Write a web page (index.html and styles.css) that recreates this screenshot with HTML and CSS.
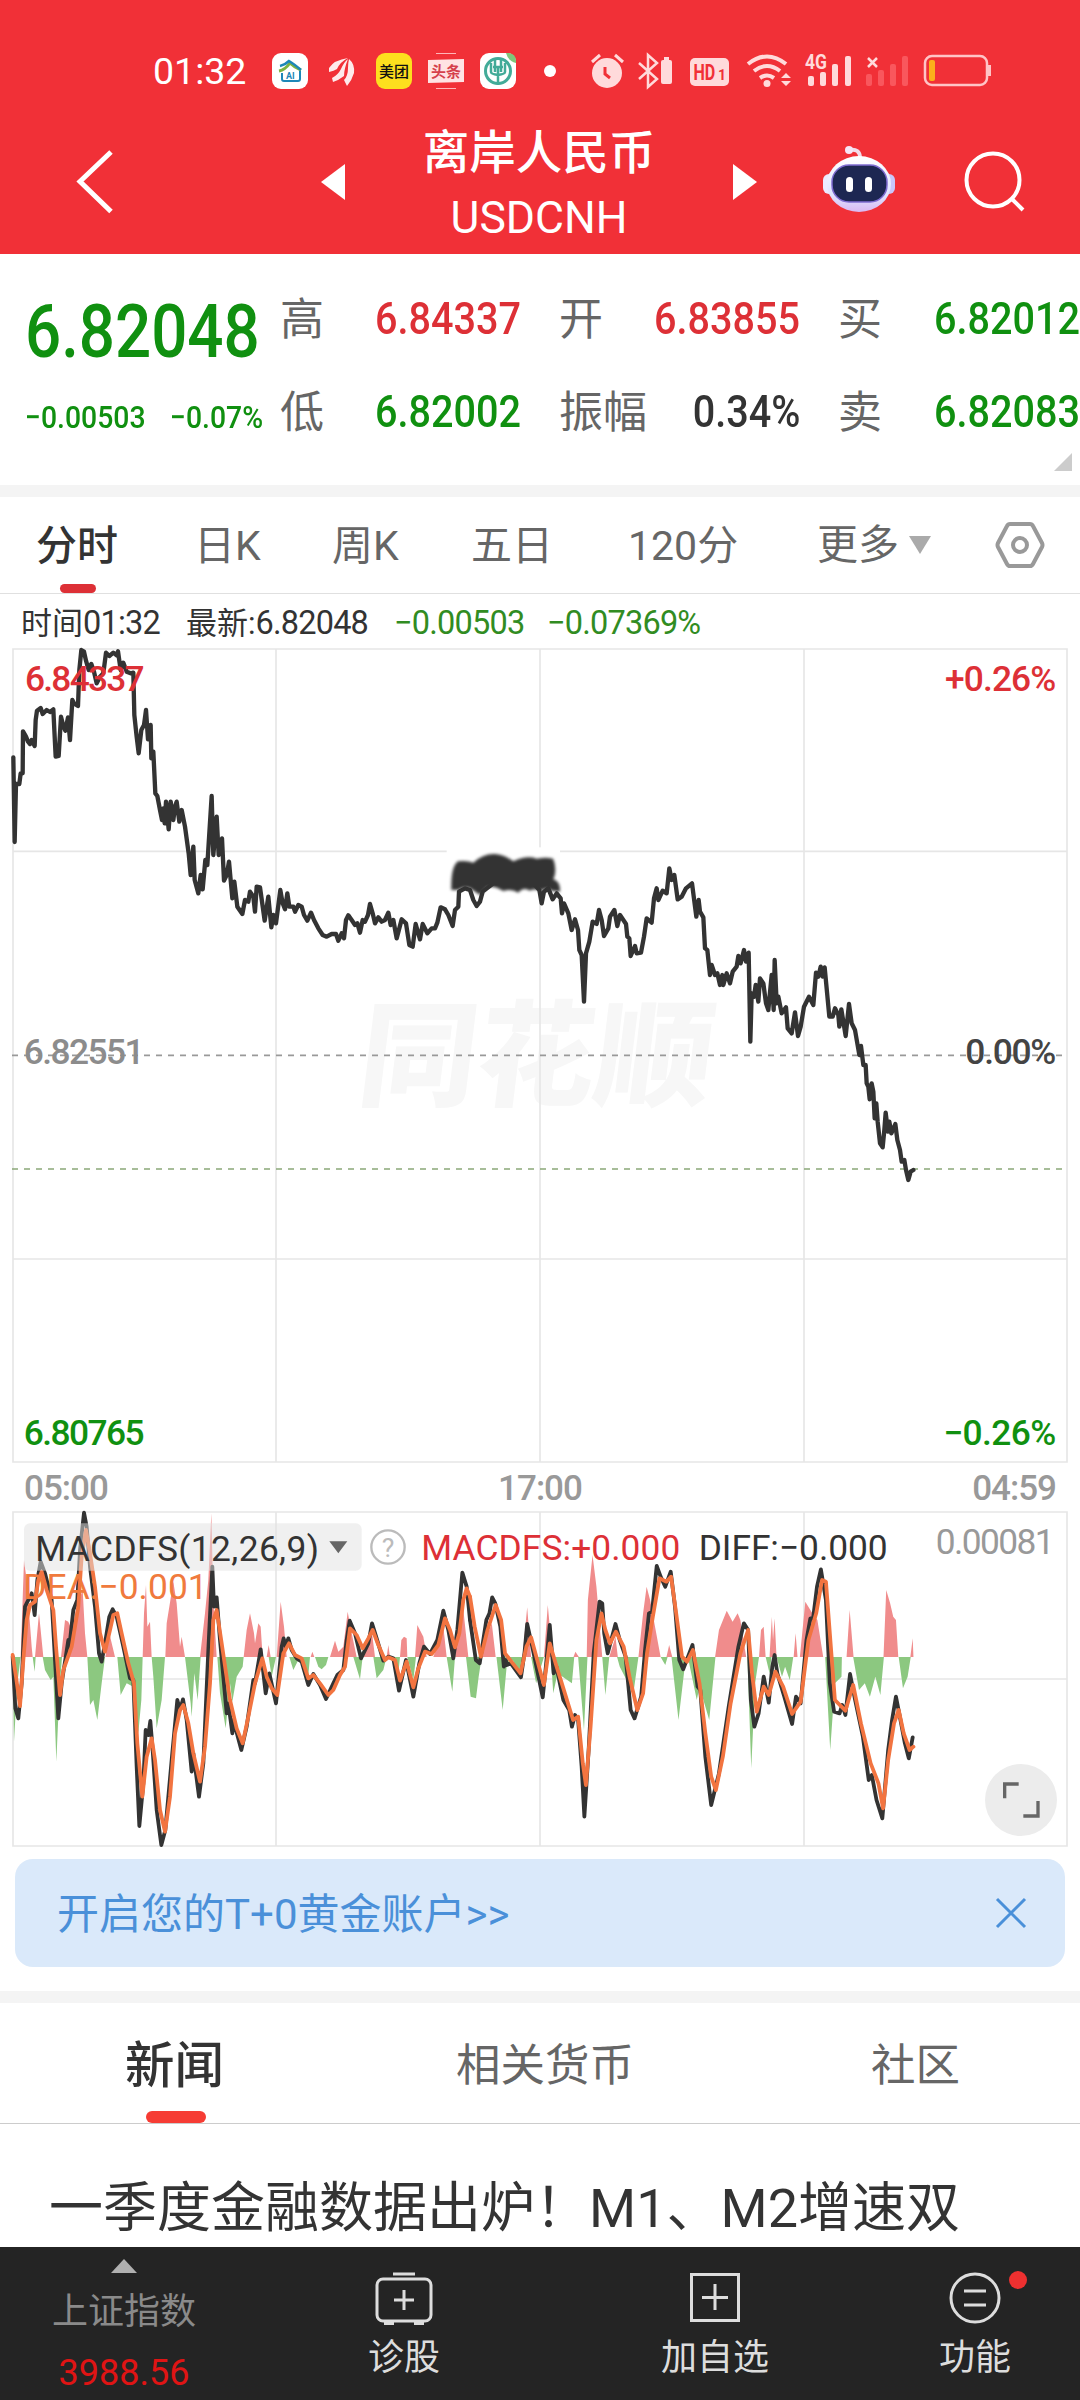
FILE: index.html
```html
<!DOCTYPE html>
<html lang="zh-CN">
<head>
  <meta charset="UTF-8">
  <meta name="viewport" content="width=device-width, initial-scale=1.0">
  <title>离岸人民币 USDCNH</title>
  <link rel="stylesheet" href="styles.css">
</head>
<body>
  <div class="page">
    <header class="header">
      <!-- Status bar -->
      <div class="status-bar">
        <span class="clock">01:32</span>
        <svg class="app-icons" width="284" height="44" viewBox="272 49 284 44">
          <rect x="272" y="53" width="36" height="36" rx="9" fill="#fff"/>
          <path d="M279 71q6-1 11-8 5 5 11 7" fill="none" stroke="#7cb342" stroke-width="3"/>
          <path d="M280 66q5-1 9-5 5 3 12 9" fill="none" stroke="#1d87b8" stroke-width="2.5"/>
          <path d="M282 73v6q0 2 2 2h14q2 0 2-2v-8" fill="none" stroke="#1d87b8" stroke-width="2"/>
          <text x="286" y="79" font-size="9" font-weight="700" fill="#1d87b8">AI</text>
          <path d="M329 68q5-8 19-10-8 4-11 11-3 2-8 3zM332 78q6-3 9-9 3-7 7-10-4 10-4 17-5 4-11 6zM347 86l-3-6q4-4 4-12 0-5 1-9 6 5 5 14-2 7-7 13z" fill="#fff" opacity=".9"/>
          <rect x="376" y="53" width="36" height="36" rx="9" fill="#fddf1e"/>
          <text x="379" y="77" font-size="15" font-weight="500" fill="#111">美团</text>
          <path d="M428 60l36-1v23l-36 1z" fill="#ffe3e4"/>
          <path d="M436 53.500h20M436 88.500h20" stroke="#ffb5b8" stroke-width="1"/>
          <text x="431" y="77" font-size="15" font-weight="700" fill="#d6404c">头条</text>
          <rect x="480" y="53" width="36" height="36" rx="9" fill="#fff"/>
          <circle cx="498" cy="71" r="12.500" fill="none" stroke="#42ab98" stroke-width="3"/>
          <path d="M495 58v14M501 58v14M491 63v9q0 2 7 3 7-1 7-3v-9M498 66v19M493 67h10" fill="none" stroke="#42ab98" stroke-width="2.500"/>
          <path d="M506 53h3q7 1 7 8v2q-8-2-10-10z" fill="#7fc67a"/>
          <circle cx="550" cy="71" r="6" fill="#fff"/>
        </svg>
        <svg class="system-icons" width="401" height="44" viewBox="591 49 401 44">
          <g fill="#ffdadb">
            <circle cx="607" cy="73" r="15"/>
            <path d="M592 62l8-7M615 55l8 7" stroke="#ffdadb" stroke-width="3"/>
            <path d="M605 67v7l5 4" fill="none" stroke="#f13037" stroke-width="3"/>
            <path d="M639 63l18 16-9 8V55l9 8-18 16" fill="none" stroke="#ffdadb" stroke-width="2.500"/>
            <rect x="661" y="60" width="11" height="24" rx="2"/><rect x="664" y="57" width="5" height="3"/>
            <rect x="690" y="58" width="39" height="28" rx="5"/>
            <text transform="translate(693.500 80) scale(.73 1)" font-size="22" font-weight="700" fill="#f13037">HD</text>
            <text x="718" y="80" font-size="14" font-weight="700" fill="#f13037">1</text>
            <g fill="none" stroke="#ffdadb" stroke-width="4">
              <path d="M748 64q19-15 38 0M754 71q13-10 26 0M760 78q7-5 14 0"/>
            </g>
            <circle cx="767" cy="83.500" r="3.500"/>
            <path d="M781 78l5-5 5 5zM781 81l5 5 5-5z"/>
            <text x="805" y="69" font-size="20" font-weight="700" textLength="22" lengthAdjust="spacingAndGlyphs">4G</text>
            <rect x="808" y="76" width="6" height="10" rx="2"/><rect x="820" y="72" width="6" height="14" rx="2"/><rect x="832" y="64" width="6" height="22" rx="2"/><rect x="845" y="56" width="6" height="30" rx="2"/>
            <path d="M868 58l9 9M877 58l-9 9" stroke="#ffdadb" stroke-width="2.500"/>
          </g>
          <g fill="#f9575d">
            <rect x="866" y="74" width="6" height="12" rx="2"/><rect x="878" y="70" width="6" height="16" rx="2"/><rect x="890" y="64" width="6" height="22" rx="2"/><rect x="902" y="56" width="6" height="30" rx="2"/>
          </g>
          <rect x="925" y="56" width="62" height="29" rx="7" fill="none" stroke="#ffc4c6" stroke-width="2.500"/>
          <rect x="929" y="60" width="6" height="21" rx="2" fill="#fcae1b"/>
          <rect x="988" y="65" width="3" height="11" fill="#ffc4c6"/>
        </svg>
      </div>

      <!-- Title bar -->
      <div class="title-bar">
        <svg class="back" width="40" height="68" viewBox="0 0 40 68"><path d="M38 4L7 33.500l31 30" fill="none" stroke="#fff" stroke-width="5"/></svg>
        <svg class="prev" width="24" height="36" viewBox="0 0 24 36"><path d="M24 0v36L0 18z" fill="#fff"/></svg>
        <div class="title">
          <div class="title-name">离岸人民币</div>
          <div class="title-code">USDCNH</div>
        </div>
        <svg class="next" width="24" height="36" viewBox="0 0 24 36"><path d="M0 0v36l24-18z" fill="#fff"/></svg>
        <svg class="robot" width="74" height="72" viewBox="824 144 74 72">
          <defs>
            <linearGradient id="shell" x1="0" y1="0" x2="0" y2="1">
              <stop offset="0" stop-color="#fff"/><stop offset=".7" stop-color="#dfe3ff"/><stop offset="1" stop-color="#d9b8f2"/>
            </linearGradient>
          </defs>
          <path d="M851 150q11-2 11 8" fill="none" stroke="#f3dcea" stroke-width="4"/>
          <circle cx="851" cy="150" r="4" fill="#f6e6f5"/>
          <rect x="825" y="174" width="13" height="20" rx="6" fill="#eceaff"/>
          <rect x="884" y="174" width="13" height="20" rx="6" fill="#c9c6fa"/>
          <ellipse cx="861" cy="184" rx="32" ry="28" fill="url(#shell)"/>
          <rect x="834" y="165" width="55" height="37" rx="17" fill="#1d2752" stroke="#7d6bd0" stroke-width="1.500"/>
          <rect x="848" y="177" width="7" height="15" rx="3.500" fill="#fff"/>
          <rect x="867" y="177" width="7" height="15" rx="3.500" fill="#fff"/>
        </svg>
        <svg class="search" width="62" height="64" viewBox="0 0 62 64">
          <circle cx="29" cy="30" r="26.500" fill="none" stroke="#fff" stroke-width="4"/><path d="M47 48l12 12" stroke="#fff" stroke-width="4"/>
        </svg>
      </div>
    </header>

    <!-- Quote -->
    <section class="quote">
      <div class="price-block">
        <div class="price num down">6.82048</div>
        <div class="change down"><span class="num">−0.00503</span><span class="num">−0.07%</span></div>
      </div>
      <div class="quote-grid">
        <div class="cell"><span class="label">高</span><span class="num value up">6.84337</span></div>
        <div class="cell"><span class="label">开</span><span class="num value up">6.83855</span></div>
        <div class="cell"><span class="label">买</span><span class="num value down">6.82012</span></div>
        <div class="cell"><span class="label">低</span><span class="num value down">6.82002</span></div>
        <div class="cell"><span class="label">振幅</span><span class="num value">0.34%</span></div>
        <div class="cell"><span class="label">卖</span><span class="num value down">6.82083</span></div>
      </div>
      <span class="corner"></span>
    </section>

    <!-- Period tabs -->
    <nav class="period-tabs">
      <span class="active">分时</span>
      <span>日K</span>
      <span>周K</span>
      <span>五日</span>
      <span>120分</span>
      <span class="more">更多<i class="caret"></i></span>
      <svg width="50" height="48" viewBox="0 0 50 48" fill="none" stroke="#999" stroke-width="4">
        <path d="M15 3h20q2 0 3 2l9 17q1 2 0 4l-9 17q-1 2-3 2H15q-2 0-3-2L3 26q-1-2 0-4l9-17q1-2 3-2z"/><circle cx="25" cy="24" r="7"/>
      </svg>
    </nav>

    <div class="info">
      <span class="info-time">时间<b>01:32</b></span>
      <span class="info-last">最新:<b>6.82048</b></span>
      <span class="info-diff"><b>−0.00503</b></span>
      <span><b>−0.07369%</b></span>
    </div>

    <!-- Price chart, drawn at 3 units per pixel -->
    <svg class="price-chart" width="1080" height="824" viewBox="0 0 3240 2472">
      <text class="watermark" transform="translate(1066 1372) skewX(-7)" x="0" y="0" textLength="1060" lengthAdjust="spacingAndGlyphs">同花顺</text>
      <g class="grid">
        <path d="M39 27H3201V2466H39zM828 27V2466M1620 27V2466M2412 27V2466M39 634H3201M39 1857H3201"/>
      </g>
      <path class="mid-line" d="M36 1246H3190"/>
      <path class="now-line" d="M36 1587H3190"/>
      <rect x="1340" y="622" width="340" height="125" fill="#fff"/>
      <polyline class="price-line" points="40,352 44,606 48,432 58,432 62,400 68,400 69,274 78,290 84,305 90,312 95,300 104,318 107,240 111,212 122,204 128,222 140,210 150,216 160,208 163,270 167,350 176,348 183,230 190,258 196,272 204,232 210,300 217,180 222,190 234,198 238,90 244,30 252,35 258,62 266,90 274,72 282,95 290,130 300,110 310,100 318,38 328,48 340,38 350,46 354,34 362,90 370,68 380,95 392,100 400,98 403,225 410,290 416,340 424,270 432,255 438,210 444,298 452,255 454,355 460,335 466,460 472,468 480,510 486,540 490,505 494,550 498,485 506,568 512,485 520,540 525,500 530,485 538,545 545,510 555,560 566,640 572,705 580,620 584,720 595,760 602,705 608,748 616,660 622,675 635,468 640,645 650,530 656,645 666,595 672,722 680,705 687,665 697,775 703,725 712,800 727,822 735,780 745,785 750,755 760,770 765,815 770,740 780,742 794,842 805,770 814,862 820,825 828,850 841,750 848,790 855,808 862,760 868,800 880,800 885,815 895,795 905,800 912,825 922,842 933,818 942,840 955,865 968,885 980,890 995,882 1008,882 1015,902 1025,880 1032,895 1038,840 1045,826 1055,840 1065,855 1072,850 1080,878 1088,840 1095,845 1104,825 1110,792 1118,820 1125,850 1135,832 1145,845 1155,840 1165,818 1172,855 1180,840 1190,895 1205,838 1218,850 1228,915 1238,920 1247,852 1260,898 1268,852 1282,880 1295,865 1305,865 1312,848 1322,802 1335,808 1345,825 1358,858 1365,810 1375,800 1377,755 1395,745 1410,750 1420,780 1430,798 1440,785 1448,755 1480,730 1600,730 1618,750 1625,790 1632,755 1645,745 1658,778 1670,760 1682,775 1686,820 1692,790 1705,820 1715,870 1725,838 1734,870 1738,930 1745,945 1752,1085 1758,940 1768,905 1778,845 1790,852 1797,810 1805,840 1812,888 1825,865 1830,830 1843,810 1852,858 1860,825 1878,852 1882,890 1888,895 1892,948 1905,918 1910,940 1923,938 1932,890 1940,835 1955,848 1962,775 1970,745 1975,780 1988,752 2000,760 2008,685 2015,720 2023,705 2033,778 2045,770 2058,745 2076,730 2089,830 2096,780 2100,815 2110,832 2115,925 2122,930 2130,1005 2135,975 2145,1005 2152,1000 2160,1035 2167,1005 2170,1035 2180,1000 2190,1030 2198,995 2210,980 2215,948 2222,970 2232,930 2238,965 2246,938 2251,1205 2255,1060 2262,1070 2267,1035 2275,1085 2280,1015 2290,1030 2298,1090 2305,1110 2315,1005 2321,1110 2324,960 2330,1090 2335,1070 2345,1120 2358,1102 2363,1165 2375,1180 2385,1117 2394,1188 2402,1160 2412,1100 2427,1070 2440,1095 2448,998 2455,1010 2462,980 2468,1010 2474,982 2488,1130 2498,1130 2505,1105 2515,1125 2518,1160 2524,1108 2537,1188 2547,1092 2555,1150 2565,1170 2578,1245 2583,1218 2590,1275 2597,1275 2600,1330 2605,1340 2609,1378 2615,1330 2620,1355 2624,1435 2629,1390 2633,1445 2640,1510 2648,1522 2653,1470 2657,1418 2664,1475 2668,1445 2674,1480 2686,1452 2692,1500 2700,1530 2705,1565 2713,1560 2718,1590 2725,1620 2732,1595 2740,1590"/>
      <path class="scribble" d="M1354 750Q1352 680 1374 664Q1400 660 1420 668Q1450 640 1485 642Q1515 645 1540 664Q1580 645 1610 656Q1650 650 1660 658Q1672 690 1660 718Q1682 725 1680 755L1655 752Q1640 740 1625 752Q1600 745 1590 752Q1570 740 1555 758Q1535 745 1510 753Q1480 735 1462 742L1440 765L1410 745Q1390 738 1375 750Z"/>
      <g class="chart-text">
        <text x="75" y="153" fill="#dd3036" textLength="358">6.84337</text>
        <text x="2835" y="153" fill="#dd3036" textLength="333">+0.26%</text>
        <text x="71" y="1272" fill="#8c8c8c" textLength="362">6.82551</text>
        <text x="2896" y="1272" fill="#444" textLength="272">0.00%</text>
        <text x="71" y="2415" fill="#109010" textLength="362">6.80765</text>
        <text x="2830" y="2415" fill="#109010" textLength="338">−0.26%</text>
      </g>
    </svg>

    <div class="time-axis"><span>05:00</span><span>17:00</span><span>04:59</span></div>

    <!-- MACD chart, same 3 units per pixel -->
    <svg class="macd-chart" width="1080" height="341" viewBox="0 330 3240 1023">
      <g class="grid"><path d="M39 336H3201V1338H39zM828 336V1338M1620 336V1338M2412 336V1338M39 837H3201"/></g>
      <path class="bar-up" d="M62 771L72 480 80 540 95 740 98 771zM105 771L117 640 130 771zM183 771L195 660 205 665 215 690 230 620 248 570 255 700 262 771zM316 771L328 700 345 771zM428 771L432 640 438 555 442 680 450 665 455 771zM496 771L500 670 520 545 530 610 540 740 545 710 555 771zM600 771L615 640 625 540 634 340 640 600 650 771zM731 771L740 690 750 640 762 700 765 730 775 670 782 680 788 771zM800 771L806 735 812 771zM830 771L842 605 852 680 860 771zM932 771L937 755 943 771zM990 771L1005 722 1015 755 1030 740 1043 635 1055 700 1070 771zM1088 771L1105 735 1115 690 1125 771zM1160 771L1165 735 1170 771zM1200 771L1204 720 1212 710 1220 715 1222 771zM1245 771L1252 675 1270 710 1280 771zM1300 771L1330 680 1340 771zM1365 771L1387 600 1405 771z"/>
      <path class="bar-down" d="M38 771L42 1025 52 850 62 771zM98 771L104 815 107 771zM128 771L135 810 152 840 160 830 169 1085 178 880 186 771zM262 771L270 915 280 900 292 960 305 850 315 771zM352 771L362 885 380 850 400 860 415 1000 424 900 428 771zM455 771L460 830 470 985 485 900 495 771zM555 771L572 910 575 950 583 820 593 900 602 771zM652 771L660 880 677 985 690 850 697 905 710 830 728 800 731 771zM806 771L815 830 828 771zM868 771L880 810 895 780 905 771 925 825 930 771zM945 771L955 800 965 808 978 795 985 771zM1060 771L1080 838 1088 771zM1120 771L1130 835 1150 810 1160 771zM1170 771L1195 820 1200 771zM1222 771L1240 840 1248 771zM1340 771L1357 875 1365 771zM1398 771L1412 890 1428 895 1436 830 1445 771z"/>
      <polyline class="diff-line" points="38,770 46,925 55,955 65,850 75,620 95,580 104,645 112,540 122,485 135,520 155,600 165,780 175,955 185,850 205,720 208,740 220,630 232,600 240,450 252,338 260,380 270,500 285,620 297,760 305,785 315,730 328,650 338,628 350,650 370,740 390,835 400,840 410,1100 418,1278 430,1150 437,990 445,1005 451,963 458,1050 470,1230 484,1335 496,1290 515,1080 532,900 540,930 549,898 560,960 575,1115 580,1060 597,1190 610,1090 625,750 637,500 642,620 650,592 660,720 680,940 685,910 697,1000 700,960 724,1050 740,980 760,840 765,850 782,748 797,880 808,820 828,910 845,740 851,715 857,740 865,715 875,750 890,775 905,785 925,855 940,822 960,855 978,897 1000,850 1012,825 1030,810 1040,720 1049,662 1065,700 1083,775 1105,730 1116,670 1130,715 1150,782 1165,770 1180,775 1197,872 1218,780 1240,890 1258,790 1272,740 1290,762 1312,720 1330,632 1345,690 1360,775 1372,690 1387,518 1400,560 1410,660"/>
      <polyline class="dea-line" points="38,765 48,830 60,918 70,780 80,660 90,615 105,605 115,540 125,515 140,570 160,630 168,740 180,885 190,810 215,740 235,620 245,470 258,390 270,460 285,560 300,700 315,755 330,690 340,645 352,640 365,700 385,790 402,850 412,1030 427,1190 440,1070 455,1015 465,1080 480,1230 495,1295 510,1190 525,1000 540,930 550,915 565,970 580,1060 600,1145 615,1040 630,850 640,660 650,630 665,730 690,900 710,985 728,1030 745,950 765,850 787,775 800,830 815,865 832,885 850,760 867,730 885,765 905,775 925,835 940,825 960,850 985,885 1000,870 1020,825 1035,800 1050,685 1070,705 1088,745 1105,715 1118,690 1135,735 1155,780 1165,772 1185,780 1200,842 1220,785 1240,862 1255,805 1275,755 1295,762 1315,735 1335,655 1350,690 1365,742 1378,700 1390,600 1400,565 1410,590"/>
      <g transform="translate(1410 0) scale(1.167 1)">
        <path class="bar-up" d="M30 771L40 720 56 670 66 771zM135 771L147 622 157 771zM190 771L200 615 212 771zM266 771L271 755 280 771zM300 771L303 600 315 465 325 560 340 771zM358 771L374 710 380 771zM433 771L445 640 454 560 463 600 490 771zM505 771L512 735 520 771zM630 771L640 690 660 632 675 665 688 640 695 660 710 771zM743 771L748 690 755 680 760 771zM770 771L776 650 779 720 783 655 788 771zM832 771L837 700 842 771zM848 771L862 605 880 640 893 660 908 771zM968 771L976 630 986 771zM1063 771L1070 570 1080 610 1088 650 1095 660 1101 771zM1132 771L1138 715 1140 771z"/>
        <path class="bar-down" d="M68 771L84 930 95 790 110 780 130 830 135 771zM157 771L170 850 190 771zM208 771L214 880 225 820 262 850 268 771zM278 771L293 990 302 771zM340 771L348 885 358 771zM378 771L385 800 420 880 433 771zM490 771L502 795 508 771zM518 771L536 960 552 800 560 771 583 900 590 860 615 960 631 771zM713 771L723 1105 733 850 743 771zM760 771L770 820 775 771zM788 771L802 830 810 800 822 840 831 771zM913 771L926 1050 938 850 955 830 956 771zM985 771L1000 870 1015 850 1028 890 1042 830 1055 885 1064 771zM1102 771L1113 865 1125 830 1133 771z"/>
        <polyline class="diff-line" points="0,660 15,780 25,790 42,660 50,640 57,592 65,610 78,680 87,800 92,780 95,795 105,790 131,832 140,760 147,672 160,740 187,892 195,800 205,675 215,820 222,800 240,900 255,930 262,980 270,945 278,960 287,1100 294,1250 305,1050 318,760 333,605 340,610 345,700 354,760 374,672 385,720 400,770 413,930 423,955 440,890 450,750 460,640 468,635 480,498 490,530 502,560 516,515 527,620 538,780 548,808 572,735 585,860 592,870 605,1070 620,1215 640,1120 665,920 690,740 704,670 715,690 722,900 731,980 742,940 755,830 768,908 777,800 783,765 790,820 808,890 828,972 838,890 850,910 865,720 875,655 882,655 892,560 902,508 915,600 925,850 936,935 950,940 957,915 965,945 977,822 990,900 1010,1010 1025,1140 1033,1125 1045,1200 1060,1255 1075,1050 1085,960 1095,890 1105,950 1118,1030 1128,1075 1138,1012"/>
        <polyline class="dea-line" points="0,590 12,680 28,770 45,690 66,615 80,660 90,760 110,790 130,820 145,740 157,712 175,790 190,855 205,730 220,790 240,865 265,960 278,950 290,1090 298,1155 310,980 325,720 338,640 348,690 360,730 375,695 395,740 410,830 430,930 445,880 455,760 470,650 487,535 505,545 517,530 530,640 545,770 558,785 573,750 590,850 605,1000 620,1130 632,1170 650,1070 670,910 695,760 715,690 725,820 737,935 755,860 768,885 785,815 805,860 828,942 850,905 870,720 890,640 905,540 915,545 925,700 938,900 965,932 985,855 1005,970 1030,1090 1050,1150 1062,1225 1075,1080 1090,970 1102,930 1115,1000 1130,1050 1140,1040"/>
      </g>
      <rect x="72" y="370" width="1013" height="142" rx="18" fill="rgba(225,225,225,.5)"/>
      <path d="M988 424h54l-27 36z" fill="#666"/>
      <g class="chart-text macd-text">
        <text x="106" y="483" fill="#333" textLength="850">MACDFS(12,26,9)</text>
        <text x="1264" y="479" fill="#dd3036" textLength="776">MACDFS:+0.000</text>
        <text x="2096" y="479" fill="#333" textLength="566">DIFF:−0.000</text>
        <text x="2807" y="462" fill="#999" textLength="356">0.00081</text>
        <text x="70" y="598" fill="#f07a3d" textLength="552">DEA:−0.001</text>
      </g>
      <circle cx="1164" cy="441" r="50" fill="none" stroke="#bbb" stroke-width="7"/>
      <text x="1164" y="470" font-size="80" text-anchor="middle" fill="#bbb">?</text>
      <circle cx="3063" cy="1200" r="108" fill="#ececec"/>
      <path d="M3014 1195V1152H3056M3070 1248H3114V1203" fill="none" stroke="#666" stroke-width="10"/>
    </svg>

    <div class="banner">
      <span>开启您的T+0黄金账户&gt;&gt;</span>
      <svg width="32" height="32" viewBox="0 0 32 32"><path d="M2 2l28 28M30 2L2 30" stroke="#4a90d9" stroke-width="3"/></svg>
    </div>

    <!-- News -->
    <nav class="news-tabs">
      <span class="active">新闻</span>
      <span>相关货币</span>
      <span>社区</span>
    </nav>
    <div class="headline">一季度金融数据出炉！M1、M2增速双</div>

    <!-- Bottom bar -->
    <footer class="bottom-bar">
      <div class="index">
        <i class="arrow-up"></i>
        <span class="index-name">上证指数</span>
        <span class="index-value">3988.56</span>
      </div>
      <div class="action">
        <svg width="60" height="56" viewBox="0 0 60 56" fill="none" stroke="#ddd" stroke-width="3"><rect x="3" y="8" width="54" height="42" rx="6"/><path d="M19 3h22M30 19v20M20 29h20M10 52.500h10M40 52.500h10"/></svg>
        <span>诊股</span>
      </div>
      <div class="action">
        <svg width="60" height="56" viewBox="0 0 60 56" fill="none" stroke="#ddd" stroke-width="3"><path d="M6.500 3.500h47v46h-47zM30 13v26M17 26.500h26"/></svg>
        <span>加自选</span>
      </div>
      <div class="action">
        <svg width="60" height="56" viewBox="0 0 60 56" fill="none" stroke="#ddd" stroke-width="3"><circle cx="30" cy="27" r="24"/><path d="M19 20h22M19 34h22"/></svg>
        <i class="badge"></i>
        <span>功能</span>
      </div>
    </footer>
  </div>
</body>
</html>
```

FILE: styles.css
```css
* {
  box-sizing: border-box;
}
body {
  margin: 0;
  font-family: Roboto, "Noto Sans CJK SC", sans-serif;
  color: #333;
  background: #fff;
}
svg {
  display: block;
  flex: none;
}
.page {
  width: 1080px;
  height: 2400px;
  overflow: hidden;
  display: flex;
  flex-direction: column;
}
.page > * {
  flex: none;
}
.up {
  color: #dd3036;
}
.down {
  color: #109010;
}
/* Narrow digits */
.num {
  display: inline-block;
  transform: scaleX(.88);
  transform-origin: left center;
  font-weight: 500;
}

/* Header */
.header {
  height: 254px;
  background: #f13037;
  color: #fff;
}
.status-bar {
  height: 110px;
  padding: 32px 0 0 153px;
  display: flex;
  align-items: center;
}
.clock {
  width: 119px;
  font-size: 37.5px;
}
.system-icons {
  margin-left: 35px;
}
.title-bar {
  height: 144px;
  display: flex;
  align-items: center;
  padding: 0 54px 0 73px;
}
.prev {
  margin-left: 208px;
}
.title {
  width: 390px;
  padding-top: 11px;
  text-align: center;
}
.title-name {
  font-size: 46.5px;
  line-height: 60px;
  font-weight: 500;
}
.title-code {
  font-size: 44.5px;
  line-height: 70px;
}
.robot {
  margin: -4px 0 0 65px;
}
.search {
  margin-left: 68px;
}

/* Quote */
.quote {
  position: relative;
  height: 231px;
  display: flex;
}
.price-block {
  width: 280px;
  padding-left: 25px;
  white-space: nowrap;
}
.price {
  margin-top: 34px;
  font-size: 74px;
  line-height: 88px;
  transform: scaleX(.86);
}
.change {
  display: flex;
  margin-top: 24px;
  font-size: 31.5px;
  line-height: 36px;
}
.change .num {
  width: 145px;
  transform: scaleX(.9);
}
.change .num + .num {
  width: 110px;
}
.quote-grid {
  width: 800px;
  display: grid;
  grid-template-columns: 241px 241px 242px;
  column-gap: 38px;
  grid-template-rows: 93px 93px;
  padding-top: 18px;
}
.cell {
  display: flex;
  justify-content: space-between;
  align-items: center;
}
.label {
  margin-top: -5px;
  font-size: 44px;
  color: #666;
}
.value {
  font-size: 45px;
  transform-origin: right center;
}
.corner {
  position: absolute;
  right: 8px;
  bottom: 14px;
  border-left: 18px solid transparent;
  border-bottom: 18px solid #ccc;
}

/* Period tabs */
.period-tabs {
  height: 109px;
  border-top: 12px solid #f4f4f4;
  border-bottom: 1px solid #e0e0e0;
  padding-left: 36px;
  display: grid;
  grid-template-columns: 158px 138px 139px 157px 189px 178px 1fr;
  align-items: center;
  font-size: 41px;
  color: #666;
}
.period-tabs span {
  height: 96px;
  line-height: 99px;
}
.active {
  position: relative;
  color: #333;
  font-weight: 500;
}
.active::after {
  content: "";
  position: absolute;
  left: 24px;
  bottom: 0;
  width: 36px;
  height: 9px;
  border-radius: 5px;
  background: #dd3036;
}
.more {
  display: flex;
  align-items: center;
}
.caret {
  margin-left: 10px;
  border: 11px solid transparent;
  border-top: 18px solid #aaa;
  border-bottom: 0;
}
.info {
  height: 46px;
  padding: 10px 0 0 21px;
  display: flex;
  align-items: baseline;
  font-size: 31px;
  line-height: 38px;
  color: #318c22;
  white-space: nowrap;
}
.info b {
  font-size: 32.5px;
  font-weight: 400;
  letter-spacing: -.8px;
}
.info-time,
.info-last {
  color: #333;
}
.info-time {
  width: 165px;
}
.info-last {
  width: 208px;
}
.info-diff {
  width: 153px;
}

/* Charts */
.grid {
  fill: none;
  stroke: #e6e6e6;
  stroke-width: 5;
}
.watermark {
  font-size: 345px;
  font-weight: 900;
  fill: #f7f7f7;
}
.mid-line,
.now-line {
  fill: none;
  stroke: #999;
  stroke-width: 5;
  stroke-dasharray: 18 18;
}
.now-line {
  stroke: #8aa878;
}
.price-line {
  fill: none;
  stroke: #333;
  stroke-width: 13;
  stroke-linejoin: round;
  stroke-linecap: round;
}
.scribble {
  fill: #333;
  filter: blur(4px);
}
.chart-text text {
  font-size: 106px;
  font-weight: 500;
  letter-spacing: -1px;
}
.macd-text text {
  font-weight: 400;
}
.time-axis {
  height: 46px;
  padding: 2px 24px 0;
  display: flex;
  justify-content: space-between;
  align-items: center;
  font-size: 35px;
  font-weight: 500;
  letter-spacing: -1px;
  color: #999;
}
.bar-up {
  fill: #f08c8c;
}
.bar-down {
  fill: #8cc880;
}
.diff-line,
.dea-line {
  fill: none;
  stroke: #333;
  stroke-width: 3.8px;
  stroke-linejoin: round;
  stroke-linecap: round;
  vector-effect: non-scaling-stroke;
}
.dea-line {
  stroke: #f27440;
}

.banner {
  height: 108px;
  margin: 8px 15px 24px;
  padding: 0 38px 0 42px;
  border-radius: 18px;
  background: #dae9fa;
  color: #4a90d9;
  font-size: 42px;
  line-height: 112px;
  display: flex;
  align-items: center;
  justify-content: space-between;
}
.banner span {
  height: 108px;
}

/* News */
.news-tabs {
  height: 133px;
  border-top: 12px solid #f4f4f4;
  border-bottom: 1px solid #ccc;
  padding-left: 125px;
  display: grid;
  grid-template-columns: 331px 415px 1fr;
  line-height: 126px;
  font-size: 44.5px;
  color: #666;
}
.news-tabs span {
  height: 120px;
}
.news-tabs .active {
  font-size: 49.5px;
  font-weight: 500;
}
.news-tabs .active::after {
  left: 21px;
  width: 60px;
  height: 12px;
  border-radius: 6px;
  background: #f63c34;
}
.headline {
  height: 123px;
  padding: 45px 0 0 49px;
  font-size: 54px;
  line-height: 80px;
  white-space: nowrap;
}

/* Bottom bar */
.bottom-bar {
  height: 153px;
  background: #242424;
  display: grid;
  grid-template-columns: 248px 312px 310px 210px;
  color: #ddd;
  font-size: 36px;
}
.index,
.action {
  position: relative;
  display: flex;
  flex-direction: column;
  align-items: center;
}
.index {
  padding-top: 12px;
}
.arrow-up {
  border: 13px solid transparent;
  border-bottom: 14px solid #b0b0b0;
  border-top: 0;
}
.index-name {
  margin-top: 12px;
  line-height: 54px;
  color: #8a8a8a;
}
.index-value {
  margin-top: 7px;
  line-height: 54px;
  color: #e01414;
}
.action {
  padding-top: 24px;
}
.action span {
  margin-top: 5px;
  line-height: 52px;
}
.badge {
  position: absolute;
  left: 139px;
  top: 24px;
  width: 18px;
  height: 18px;
  border-radius: 50%;
  background: #ee3030;
}
```
